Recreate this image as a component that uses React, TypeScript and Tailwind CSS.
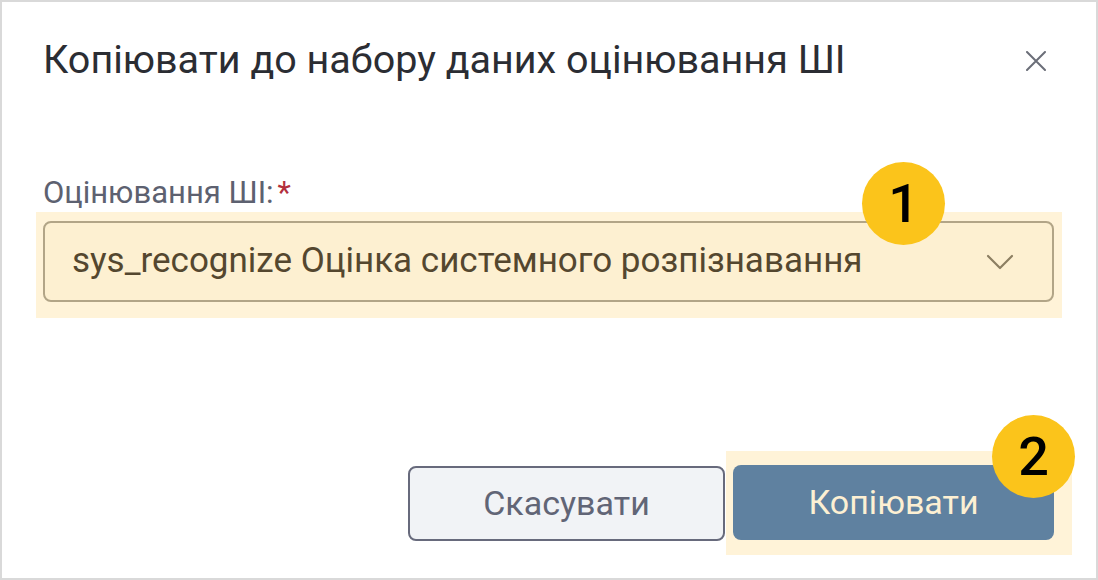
import React from "react";

export default function App() {
  return (
    <div className="w-[1098px] h-[580px] bg-white border-2 border-[#d9d9d9] flex flex-col pl-[41px] pr-[42px] font-['Roboto','Noto_Sans',sans-serif] overflow-hidden">
      <div className="mt-[36px] flex items-center justify-between h-[44px]">
        <h1 className="text-[39.5px] leading-[44px] text-[#2b2d33] font-normal whitespace-nowrap">
          Копіювати до набору даних оцінювання ШІ
        </h1>
        <div className="mr-[8px] w-[20px] h-[20px] mt-[2px]">
          <svg width="20" height="20" viewBox="0 0 20 20" fill="none">
            <path d="M1 1L19 19M19 1L1 19" stroke="#6b6e78" strokeWidth="2" strokeLinecap="round" />
          </svg>
        </div>
      </div>

      <div className="mt-[94px] h-[33px] text-[31px] leading-[33px] text-[#5d6170] whitespace-nowrap">
        Оцінювання ШІ:<span className="text-[#b3303d] ml-[4px]">*</span>
      </div>

      <div className="relative mt-[3px] -ml-[7px] -mr-[8px] pl-[7px] pr-[8px] pt-[9px] pb-[16px] bg-[#fff3d8]">
        <div className="h-[81px] rounded-[8px] border-2 border-[#b2a587] bg-[#fdf0d1] flex items-center justify-between pl-[27px] pr-[38px]">
          <span className="text-[35px] text-[#54472f] whitespace-nowrap">
            sys_recognize Оцінка системного розпізнавання
          </span>
          <svg width="28" height="16" viewBox="0 0 28 16" fill="none">
            <path d="M2 2L14 14L26 2" stroke="#8c7f62" strokeWidth="2.2" strokeLinecap="round" strokeLinejoin="round" />
          </svg>
        </div>
        <div className="absolute left-[826px] top-[-50px] w-[83px] h-[83px] rounded-full bg-[#fbc41b] flex items-center justify-center">
          <span className="text-[54px] leading-none font-medium text-black">1</span>
        </div>
      </div>

      <div className="mt-[133px] flex items-center justify-end">
        <button className="w-[317px] h-[75px] mr-[1px] rounded-[8px] border-2 border-[#676a7c] bg-[#f1f3f6] text-[34px] text-[#616576]">
          Скасувати
        </button>
        <div className="relative -mr-[18px] pl-[7px] pr-[18px] pt-[14px] pb-[15px] bg-[#fff3d8]">
          <button className="w-[321px] h-[75px] rounded-[8px] bg-[#5f81a0] text-[34px] text-[#fdf0d3] flex items-center justify-center">
            Копіювати
          </button>
          <div className="absolute left-[266px] top-[-36px] w-[83px] h-[83px] rounded-full bg-[#fbc41b] flex items-center justify-center">
            <span className="text-[54px] leading-none font-medium text-black">2</span>
          </div>
        </div>
      </div>
    </div>
  );
}
